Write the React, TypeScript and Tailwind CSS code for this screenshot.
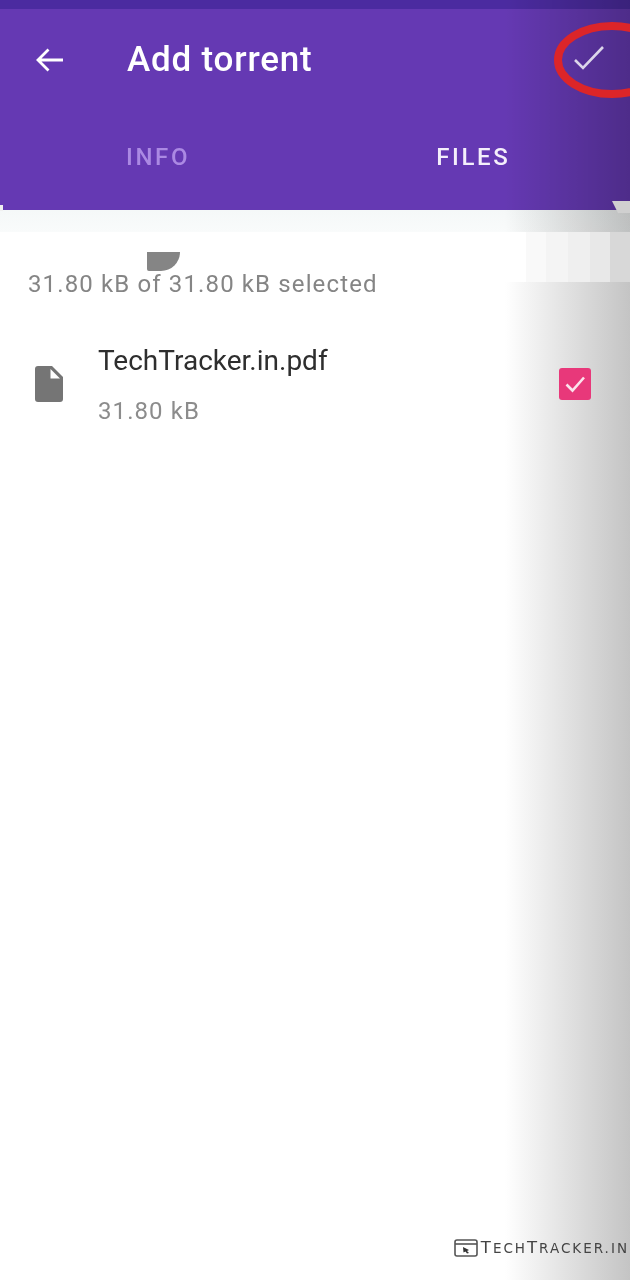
const PURPLE = '#6539b3'

const BackArrow = () => (
  <svg viewBox="0 0 28 28" width="28" height="28" fill="none" stroke="#fff" strokeWidth="2.8" aria-hidden="true" className="block shrink-0">
    <path d="M 28 14 L 3 14 M 13.5 3.5 L 3 14 L 13.5 24.5" />
  </svg>
)

const FileIcon = () => (
  <svg viewBox="0 0 28 36" width="28" height="36" aria-hidden="true" className="block shrink-0">
    <path d="M 3 0 L 17 0 L 28 11 L 28 33 Q 28 36 25 36 L 3 36 Q 0 36 0 33 L 0 3 Q 0 0 3 0 Z" fill="#757575" />
    <path d="M 15.5 3 L 25 12.5 L 15.5 12.5 Z" fill="#fff" />
  </svg>
)

const Checkbox = () => (
  <div className="relative z-10 flex h-[32px] w-[32px] items-center justify-center rounded-[3px] bg-[#e8387a]">
    <svg viewBox="0 0 24 24" width="24" height="24" fill="none" stroke="#fbe3ec" strokeWidth="2.6" aria-hidden="true">
      <path d="M 3.5 12.5 L 9.5 18.5 L 21 5.5" />
    </svg>
  </div>
)

const Watermark = () => (
  <div className="flex items-center gap-[3px]">
    <svg viewBox="0 0 24 18" width="24" height="18" fill="none" aria-hidden="true" className="block shrink-0">
      <rect x="1" y="1" width="22" height="16" rx="2" stroke="#555" strokeWidth="1.6" />
      <path d="M 1 5 L 23 5" stroke="#555" strokeWidth="1.6" />
      <path d="M 9 8 L 15 11 L 13 12 L 15 14 L 13 14.5 L 11.5 12.5 L 9.5 13.5 Z" fill="#333" />
    </svg>
    <span className="whitespace-nowrap font-['DejaVu_Sans',sans-serif] text-[16.5px] leading-none tracking-[2px] text-[#444]">
      T<span className="text-[13.5px]">ECH</span>T<span className="text-[13.5px]">RACKER.IN</span>
    </span>
  </div>
)

export default function App() {
  return (
    <div className="relative flex h-[1280px] w-[630px] flex-col overflow-hidden bg-white font-['Roboto',sans-serif]">
      <div className="h-[9px] bg-[#4b2ba0]" />

      <header className="flex h-[201px] flex-col" style={{ backgroundColor: PURPLE }}>
        <div className="flex h-[101px] items-center pl-[35px]">
          <BackArrow />
          <h1 className="m-0 ml-[64px] text-[35px] font-medium leading-none tracking-[0.8px] text-white">Add torrent</h1>
        </div>
        <div className="mt-[19px] flex h-[56px] items-center text-[24px] font-medium leading-none tracking-[0.11em]">
          <span className="ml-[126px] text-[#ab89e3]">INFO</span>
          <span className="ml-[246px] text-[#f4effb]">FILES</span>
        </div>
      </header>

      <div className="h-[22px] bg-gradient-to-b from-[#f5f8f8] to-[#f9fbfb]" />

      <div className="h-[38px] pl-[147px] pt-[20px]">
        <div className="h-[19px] w-[33px] rounded-bl-[3px] rounded-br-[30px] bg-[#858585]" />
      </div>

      <p className="m-0 pl-[28px] text-[24px] leading-[28px] tracking-[0.047em] text-[#858585]">
        31.80 kB of 31.80 kB selected
      </p>

      <div className="mt-[45px] flex items-center pl-[35px] pr-[39px]">
        <FileIcon />
        <div className="ml-[35px] flex flex-1 flex-col">
          <span className="text-[28px] leading-[36px] text-[#2e2e2e]">TechTracker.in.pdf</span>
          <span className="mt-[18px] text-[24px] leading-[28px] tracking-[0.045em] text-[#8c8c8c]">31.80 kB</span>
        </div>
        <Checkbox />
      </div>

      {/* Photo shading along the right edge */}
      <div className="pointer-events-none absolute inset-y-0 right-0 w-[125px] bg-gradient-to-r from-white to-[#c4c4c4] mix-blend-multiply" />

      {/* Lighter retouched bands under the header */}
      <div className="pointer-events-none absolute left-[490px] top-[232px] flex h-[50px] w-[140px]">
        <div className="w-[36px] bg-white" />
        <div className="w-[20px] bg-[#f9f9f9]" />
        <div className="w-[22px] bg-[#f4f4f4]" />
        <div className="w-[22px] bg-[#efefef]" />
        <div className="w-[20px] bg-[#e8e8e8]" />
        <div className="w-[20px] bg-[#d8d8d8]" />
      </div>

      {/* Torn corners of the retouched strip */}
      <svg viewBox="0 0 18 12" width="18" height="12" aria-hidden="true" className="absolute left-[612px] top-[201px]">
        <path d="M 0 0 L 18 0 L 18 12 L 6 12 Z" fill="#d0d0d0" />
      </svg>
      <div className="absolute left-0 top-[205px] h-[6px] w-[3px] bg-[#f0f0f0]" />

      {/* Red marker circle drawn over the confirm button */}
      <svg viewBox="0 0 90 80" width="90" height="80" fill="none" aria-hidden="true" className="absolute left-[550px] top-[20px]">
        <ellipse cx="62" cy="40" rx="54" ry="34" stroke="#dc2529" strokeWidth="8" />
        <path d="M 25 40 L 33 48 L 53 27" stroke="#dcd6ea" strokeWidth="2.6" />
      </svg>

      <div className="absolute bottom-[23px] right-[1px]">
        <Watermark />
      </div>
    </div>
  )
}
